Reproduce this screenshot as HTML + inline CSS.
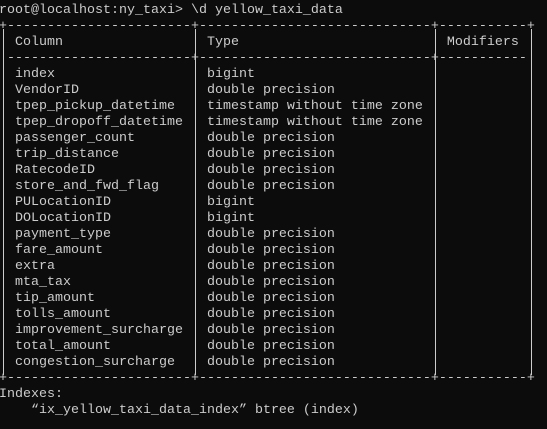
<!DOCTYPE html>
<html><head><meta charset="utf-8"><style>
html,body{margin:0;padding:0;background:#0c0c0c;width:547px;height:429px;overflow:hidden}
pre{margin:0;position:absolute;left:-1px;top:3px;font-family:"Liberation Mono","DejaVu Sans Mono",monospace;font-size:13.33px;line-height:16px;color:#cccccc;white-space:pre}
.v{position:absolute;width:1px;background:#cccccc;top:29px;height:346px}
</style></head><body>
<pre>root@localhost:ny_taxi&gt; \d yellow_taxi_data
+-----------------------+-----------------------------+-----------+
  Column                  Type                          Modifiers
 -----------------------+-----------------------------+-----------
  index                   bigint
  VendorID                double precision
  tpep_pickup_datetime    timestamp without time zone
  tpep_dropoff_datetime   timestamp without time zone
  passenger_count         double precision
  trip_distance           double precision
  RatecodeID              double precision
  store_and_fwd_flag      double precision
  PULocationID            bigint
  DOLocationID            bigint
  payment_type            double precision
  fare_amount             double precision
  extra                   double precision
  mta_tax                 double precision
  tip_amount              double precision
  tolls_amount            double precision
  improvement_surcharge   double precision
  total_amount            double precision
  congestion_surcharge    double precision
+-----------------------+-----------------------------+-----------+
Indexes:
    “ix_yellow_taxi_data_index” btree (index)</pre>
<div class="v" style="left:3px"></div>
<div class="v" style="left:195px"></div>
<div class="v" style="left:435px"></div>
<div class="v" style="left:531px"></div>
</body></html>
